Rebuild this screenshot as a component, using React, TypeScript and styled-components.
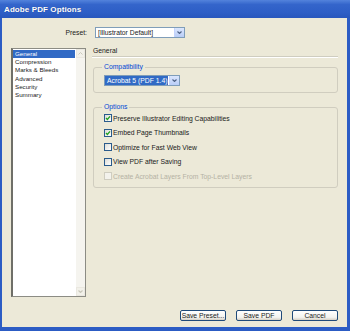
import styled, { createGlobalStyle } from "styled-components";

const GlobalStyle = createGlobalStyle`
  html, body {
    margin: 0;
    padding: 0;
    background: #ece9d8;
  }
`;

const Window = styled.div`
  width: 350px;
  height: 331px;
  display: flex;
  flex-direction: column;
  font-family: "Liberation Sans", Arial, sans-serif;
  font-size: 6.8px;
  color: #1a1a1a;
  overflow: hidden;
`;

const TitleBar = styled.div`
  height: 18px;
  flex: none;
  display: flex;
  align-items: center;
  padding-left: 4px;
  background: linear-gradient(#5383dc 0%, #3465cb 25%, #2d5ec6 70%, #2857bd 100%);
  color: #fff;
  font-weight: bold;
  font-size: 8px;
  letter-spacing: 0.1px;
  text-shadow: 0 0 1px rgba(0, 0, 0, 0.3);
`;

const Client = styled.div`
  flex: 1;
  display: flex;
  flex-direction: column;
  background: #ece9d8;
  border: solid #2c5cc4;
  border-width: 0 3px 4px 2px;
`;

const PresetRow = styled.div`
  display: flex;
  align-items: center;
  margin-top: 9px;
  gap: 8px;
`;

const PresetLabel = styled.span`
  width: 85px;
  text-align: right;
`;

const Combo = styled.div<{ $width: number }>`
  width: ${(p) => p.$width}px;
  height: 11px;
  box-sizing: border-box;
  border: 1px solid #7f9db9;
  background: #fff;
  display: flex;
  align-items: stretch;
`;

const ComboText = styled.span<{ $selected?: boolean }>`
  flex: 1;
  display: flex;
  align-items: center;
  padding-left: 2px;
  margin: ${(p) => (p.$selected ? "0 1px 0 0" : "0")};
  background: ${(p) => (p.$selected ? "#316ac5" : "transparent")};
  color: ${(p) => (p.$selected ? "#fff" : "#1a1a1a")};
  white-space: nowrap;
`;

const ComboButton = styled.span`
  width: 9px;
  display: flex;
  align-items: center;
  justify-content: center;
  background: linear-gradient(#dbe6fd, #b9cdf7);
  border-left: 1px solid #c3d3fd;
`;

const MainRow = styled.div`
  display: flex;
  margin-top: 10px;
  padding-left: 9px;
  gap: 6px;
`;

const ListBox = styled.div`
  width: 75px;
  height: 249px;
  box-sizing: border-box;
  background: #fff;
  border: 1px solid #8c8c84;
  border-left: 2px solid #6f6f68;
  display: flex;
`;

const ListItems = styled.ul`
  flex: 1;
  margin: 0;
  padding: 1px 1px 0 0;
  list-style: none;
`;

const ListItem = styled.li<{ $selected?: boolean }>`
  height: 8.2px;
  line-height: 8.2px;
  padding-left: 2px;
  font-size: 6.2px;
  background: ${(p) => (p.$selected ? "#316ac5" : "transparent")};
  color: ${(p) => (p.$selected ? "#fff" : "#1a1a1a")};
`;

const ScrollBar = styled.div`
  width: 9px;
  background: #f5f4ef;
  display: flex;
  flex-direction: column;
  justify-content: space-between;
`;

const ScrollArrow = styled.div`
  height: 9px;
  box-sizing: border-box;
  border: 1px solid #eae8e0;
  background: #f2f1ea;
  display: flex;
  align-items: center;
  justify-content: center;
`;

const Panel = styled.div`
  width: 246px;
  display: flex;
  flex-direction: column;
`;

const PanelHeader = styled.div`
  height: 7px;
  line-height: 6px;
  padding-left: 1px;
  padding-bottom: 1px;
  border-bottom: 1px solid #cfcdc0;
  box-shadow: 0 1px 0 #fff;
`;

const Group = styled.fieldset<{ $top: number; $pad: number }>`
  margin: ${(p) => p.$top}px 0 0 1px;
  padding: 0 0 ${(p) => p.$pad}px 10px;
  border: 1px solid #d0cdbf;
  border-radius: 3px;
  min-width: 0;
`;

const Legend = styled.legend`
  margin-left: -2px;
  padding: 0 2px;
  color: #0046d5;
  height: 8px;
  line-height: 8px;
`;

const ComboWrap = styled.div`
  margin-top: 4px;
`;

const CheckRow = styled.label<{ $disabled?: boolean }>`
  height: 14.5px;
  display: flex;
  align-items: center;
  gap: 1px;
  color: ${(p) => (p.$disabled ? "#b5b2a4" : "#1a1a1a")};
`;

const Box = styled.span<{ $disabled?: boolean }>`
  width: 8px;
  height: 8px;
  box-sizing: border-box;
  border: 1px solid ${(p) => (p.$disabled ? "#cfcdc0" : "#2a5b8c")};
  background: ${(p) => (p.$disabled ? "#f3f2ec" : "linear-gradient(135deg, #dcdcd7, #fff)")};
  display: flex;
  align-items: center;
  justify-content: center;
`;

const ButtonRow = styled.div`
  display: flex;
  justify-content: flex-end;
  gap: 10px;
  margin-top: 13px;
  padding-right: 9px;
`;

const Button = styled.button`
  width: 46px;
  height: 11px;
  padding: 0;
  box-sizing: border-box;
  border: 1px solid #1f4a7a;
  border-radius: 2px;
  background: linear-gradient(#fff, #f3f3ef 70%, #d6d0c5);
  font-family: "Liberation Sans", Arial, sans-serif;
  font-size: 6.8px;
  color: #1a1a1a;
  line-height: 9px;
`;

const Chevron = ({ color = "#4d6185" }: { color?: string }) => (
  <svg width="5" height="3" viewBox="0 0 5 3">
    <path d="M0.5 0.5 L2.5 2.5 L4.5 0.5" fill="none" stroke={color} strokeWidth="1.1" />
  </svg>
);

const Check = () => (
  <svg width="6" height="6" viewBox="0 0 6 6">
    <path d="M1 3 L2.4 4.5 L5 1.3" fill="none" stroke="#21a121" strokeWidth="1.3" />
  </svg>
);

const listItems = ["General", "Compression", "Marks & Bleeds", "Advanced", "Security", "Summary"];

const options = [
  { label: "Preserve Illustrator Editing Capabilities", checked: true },
  { label: "Embed Page Thumbnails", checked: true },
  { label: "Optimize for Fast Web View", checked: false },
  { label: "View PDF after Saving", checked: false },
  { label: "Create Acrobat Layers From Top-Level Layers", checked: false, disabled: true },
];

const App = () => {
  return (
    <>
      <GlobalStyle />
      <Window>
        <TitleBar>Adobe PDF Options</TitleBar>
        <Client>
          <PresetRow>
            <PresetLabel>Preset:</PresetLabel>
            <Combo $width={90}>
              <ComboText>[Illustrator Default]</ComboText>
              <ComboButton>
                <Chevron />
              </ComboButton>
            </Combo>
          </PresetRow>

          <MainRow>
            <ListBox>
              <ListItems>
                {listItems.map((item, i) => (
                  <ListItem key={item} $selected={i === 0}>
                    {item}
                  </ListItem>
                ))}
              </ListItems>
              <ScrollBar>
                <ScrollArrow>
                  <svg width="5" height="3" viewBox="0 0 5 3">
                    <path d="M0.5 2.5 L2.5 0.5 L4.5 2.5" fill="none" stroke="#c9c7ba" strokeWidth="1" />
                  </svg>
                </ScrollArrow>
                <ScrollArrow>
                  <Chevron color="#c9c7ba" />
                </ScrollArrow>
              </ScrollBar>
            </ListBox>

            <Panel>
              <PanelHeader>General</PanelHeader>

              <Group $top={6} $pad={6}>
                <Legend>Compatibility</Legend>
                <ComboWrap>
                  <Combo $width={76}>
                    <ComboText $selected>Acrobat 5 (PDF 1.4)</ComboText>
                    <ComboButton>
                      <Chevron />
                    </ComboButton>
                  </Combo>
                </ComboWrap>
              </Group>

              <Group $top={10} $pad={3}>
                <Legend>Options</Legend>
                {options.map((o) => (
                  <CheckRow key={o.label} $disabled={o.disabled}>
                    <Box $disabled={o.disabled}>{o.checked && <Check />}</Box>
                    {o.label}
                  </CheckRow>
                ))}
              </Group>
            </Panel>
          </MainRow>

          <ButtonRow>
            <Button>Save Preset...</Button>
            <Button>Save PDF</Button>
            <Button>Cancel</Button>
          </ButtonRow>
        </Client>
      </Window>
    </>
  );
};

export default App;
